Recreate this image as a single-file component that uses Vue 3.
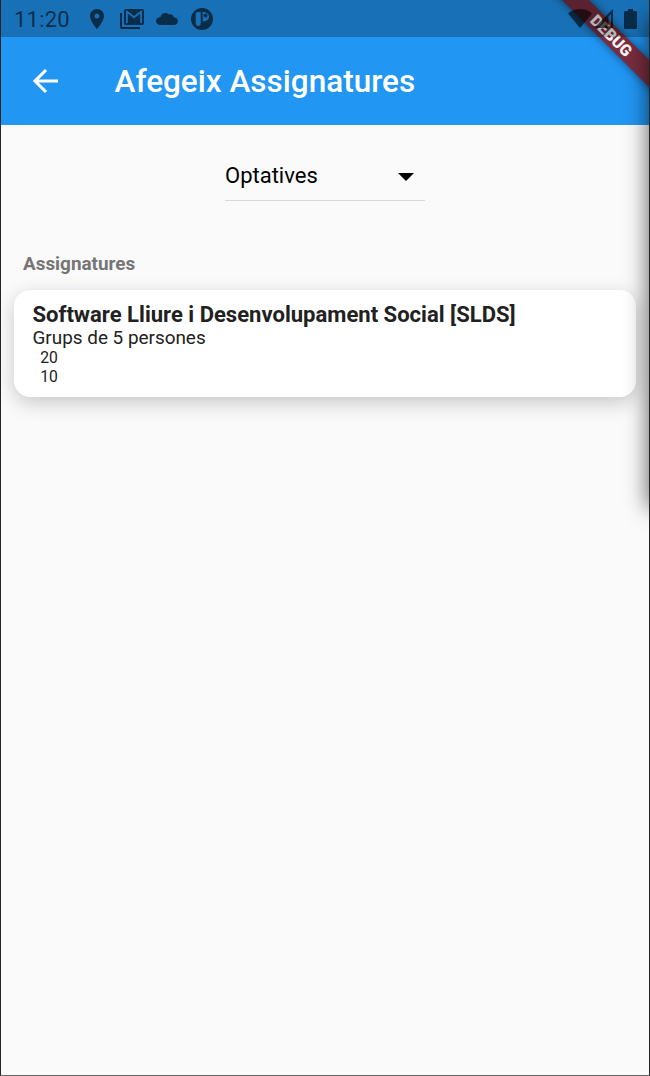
<script setup>
const title = 'Afegeix Assignatures'
const selected = 'Optatives'
const course = {
  name: 'Software Lliure i Desenvolupament Social [SLDS]',
  group: 'Grups de 5 persones',
  values: ['20', '10']
}
</script>

<template>
  <div class="screen">
    <header class="top">
      <div class="status">
        <span class="clock">11:20</span>
        <svg class="pin" width="14" height="20" viewBox="0 0 14 20"><path fill-rule="evenodd" d="M7 0C3.1 0 0 3.1 0 7c0 5.2 7 13 7 13s7-7.800 7-13c0-3.900-3.100-7-7-7zm0 9.500A2.500 2.500 0 1 1 7 4.500a2.500 2.500 0 0 1 0 5z" /></svg>
        <svg class="mail" width="24" height="20" viewBox="0 0 24 20"><path d="M0 4h2v14h18v2H2a2 2 0 0 1-2-2z" /><path fill-rule="evenodd" d="M6 0h16a2 2 0 0 1 2 2v12a2 2 0 0 1-2 2H6a2 2 0 0 1-2-2V2a2 2 0 0 1 2-2zM6 1.800V14h1.800V4.600L14 9.400l6.200-4.800V14H22V1.800h-1.200L14 6.900 7.200 1.800z" /></svg>
        <svg class="cloud" width="22" height="12" viewBox="0 0 22 12"><path d="M18 4.600C17.200 2 15 .8 13 1.500 12 .5 10.800 0 9.500 0 7 0 5 1.600 4.500 4 2 4.200 0 5.800 0 8c0 2.300 1.900 4 4.300 4h13.500c2.300 0 4.200-1.600 4.200-3.800 0-2-1.700-3.500-4-3.600z" /></svg>
        <svg class="disc" width="22" height="22" viewBox="0 0 22 22"><path fill-rule="evenodd" d="M11 0a11 11 0 1 1 0 22 11 11 0 0 1 0-22zM7.200 4C5.500 4 4.700 5 4.700 6.500v9c0 1.600 1 2.500 2.500 2.500s2.500-.9 2.500-2.500V4zM11.700 4v9.500c3.700 0 6.300-1.700 6.300-4.700S15.400 4 11.700 4zm2.800 1.500a2 2 0 1 1 0 4 2 2 0 0 1 0-4z" /></svg>
        <svg class="wifi" width="24" height="19" viewBox="0 0 24 19"><path d="M12 19L0 4.400C3.300 1.500 7.400 0 12 0s8.700 1.500 12 4.400z" /></svg>
        <svg class="signal" width="19" height="19" viewBox="0 0 19 19"><path fill-rule="evenodd" d="M0 19L19 0v19zm14.500-2H17V5l-2.500 2.500z" /></svg>
        <svg class="battery" width="13" height="20" viewBox="0 0 13 20"><path d="M4 0h5v2h2.500A1.500 1.500 0 0 1 13 3.500v15a1.500 1.500 0 0 1-1.500 1.500h-10A1.500 1.500 0 0 1 0 18.500v-15A1.500 1.500 0 0 1 1.500 2H4z" /></svg>
      </div>
      <div class="bar">
        <svg class="back" width="26" height="26" viewBox="0 0 26 26"><path d="M26 13H3M14 2L3 13l11 11" /></svg>
        <h1>{{ title }}</h1>
      </div>
    </header>
    <main>
      <div class="select">
        <span>{{ selected }}</span>
        <svg width="16" height="8" viewBox="0 0 16 8"><path d="M0 0h16L8 8z" /></svg>
      </div>
      <h2>Assignatures</h2>
      <section class="card">
        <h3>{{ course.name }}</h3>
        <p class="group">{{ course.group }}</p>
        <p v-for="v in course.values" :key="v" class="value">{{ v }}</p>
      </section>
    </main>
    <div class="ribbon"><span>DEBUG</span></div>
    <div class="shade"></div>
    <div class="frame"></div>
  </div>
</template>

<style>
body { margin: 0; }
</style>

<style scoped>
.screen { position: relative; width: 650px; height: 1076px; overflow: hidden; background: #fafafa; font-family: Roboto, sans-serif; color: #212121; }
h1, h2, h3, p { margin: 0; white-space: nowrap; }
.top { height: 125px; background: #2196f3; color: #fff; }
.status { position: relative; z-index: 2; box-sizing: border-box; height: 37px; padding: 0 13px 0 14px; display: flex; align-items: center; background: rgba(0, 0, 0, 0.250); color: rgba(0, 0, 0, 0.600); fill: rgba(0, 0, 0, 0.600); }
.status svg { flex: none; }
.clock { width: 76px; font-size: 22px; line-height: 37px; letter-spacing: 0.2px; padding-top: 1px; }
.pin { margin-right: 16px; }
.mail { margin-right: 12px; }
.cloud { margin-right: 13px; }
.wifi { margin: 0 2px 0 auto; }
.signal { margin-right: 11px; }
.bar { height: 88px; display: flex; align-items: center; padding-left: 32px; }
.back { margin-right: 56.500px; fill: none; stroke: #fff; stroke-width: 3.100; }
h1 { font-size: 31.500px; line-height: 40px; font-weight: 500; padding-top: 2px; }
main { padding: 26px 14px 0; }
.select { box-sizing: border-box; width: 200px; height: 50px; margin: 0 auto; padding-right: 11px; display: flex; align-items: center; justify-content: space-between; border-bottom: 1px solid #d9d9d9; color: #000; font-size: 22px; }
.select svg { margin-top: 2px; }
h2 { margin: 50px 0 0 9px; font-size: 18.900px; line-height: 26px; font-weight: 700; color: #757575; }
.card { box-sizing: border-box; height: 107px; margin-top: 13px; padding: 12px 18.500px 0; border-radius: 16px; background: #fff; box-shadow: 0 6px 20px rgba(0, 0, 0, 0.2); }
h3 { font-size: 22.050px; line-height: 26px; font-weight: 700; }
.group { font-size: 18.900px; line-height: 20px; }
.value { padding-left: 7.800px; font-size: 15.700px; line-height: 19px; }
.ribbon { position: absolute; left: 513px; top: 28px; width: 200px; height: 19px; transform: rotate(45deg); background: rgb(121, 45, 63); box-shadow: 0 0 9px rgba(0, 0, 0, 0.500); text-align: center; }
.ribbon span { margin-right: 5px; color: #f4f4f4; font-size: 16px; line-height: 20px; font-weight: 900; }
.shade { position: absolute; z-index: 3; left: 650px; top: 20px; width: 40px; height: 486px; box-shadow: 0 0 22px 2px rgba(0, 0, 0, 0.600); }
.frame { position: absolute; z-index: 4; inset: 0; border: 1px solid #242424; border-top: 0; border-bottom-color: #666; pointer-events: none; }
</style>
